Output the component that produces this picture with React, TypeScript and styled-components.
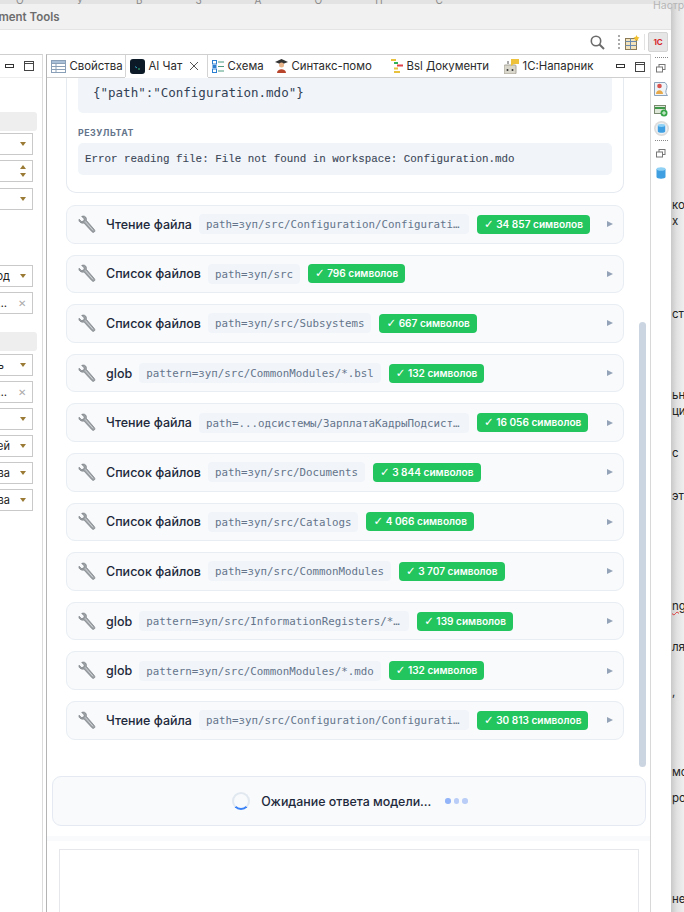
import React from "react";
import styled, { createGlobalStyle } from "styled-components";

const Global = createGlobalStyle`
  html, body { margin: 0; padding: 0; background: #e4e4e4; }
  * { box-sizing: border-box; }
  #root { width: 684px; height: 912px; overflow: hidden; }
`;

const UI = `Inter, "Noto Sans", sans-serif`;

const Page = styled.div`
  position: relative; width: 684px; height: 912px; overflow: hidden;
  display: flex; flex-direction: column; font-family: ${UI}; color: #1f2937;
`;
const Strip = styled.div`
  height: 4px; flex: none; overflow: hidden; background: #e3e3e3; color: #8a8a8a;
  display: flex; gap: 52px; padding-left: 16px; font-size: 10px; line-height: 0; letter-spacing: 1px;
`;
const CornerText = styled.div`
  position: absolute; left: 653px; top: 0; font-size: 10.5px; line-height: 12px; color: #b5b5b5;
`;
const Below = styled.div`flex: 1; min-height: 0; display: flex;`;
const Win = styled.div`
  width: 671px; flex: none; display: flex; flex-direction: column; background: #fff;
  border-top-right-radius: 10px; overflow: hidden;
`;
const Backdrop = styled.div`
  flex: 1; overflow: hidden; white-space: nowrap; font-size: 11.5px; line-height: 14px; color: #222;
  background: linear-gradient(90deg, #c9c9c9 0, #e2e2e2 6px, #efefef 13px);
  display: flex; flex-direction: column; padding-left: 1px;
`;
const Scrap = styled.span<{ $top: number; $red?: boolean }>`
  margin-top: ${p => p.$top}px; height: 14px; display: block;
  ${p => p.$red ? "text-decoration: underline wavy #d33; text-decoration-thickness: 1px;" : ""}
`;
const TitleBar = styled.div`
  height: 26px; flex: none; background: #f1f1f1; border-bottom: 1px solid #e4e4e4;
  display: flex; align-items: center; overflow: hidden;
`;
const Title = styled.div`
  margin-left: -47px; font-weight: 600; font-size: 11.5px; color: #6d6d6d; white-space: nowrap;
`;
const Toolbar = styled.div`
  height: 24px; flex: none; background: #fff; display: flex; align-items: center; justify-content: flex-end; padding-right: 3px;
`;
const ToolDots = styled.div`width: 1px; height: 14px; margin: 0 5px 0 13px; border-left: 2px dotted #aaa;`;
const ToolSep = styled.div`width: 1px; height: 16px; margin: 0 3px 0 4px; background: #e2e2e2;`;
const OneCButton = styled.div`
  width: 20px; height: 20px; background: #e6e6e6; border: 1px solid #d4d4d4; border-radius: 2px;
  display: flex; align-items: center; justify-content: center;
`;
const OneCText = styled.span`font-size: 8px; font-weight: 700; color: #d8262c; letter-spacing: -.3px;`;
const Bench = styled.div`flex: 1; min-height: 0; display: flex;`;

const LeftPanel = styled.div`
  width: 43px; flex: none; border-top: 1px solid #cfcfcf; border-right: 1px solid #dcdcdc; overflow: hidden;
`;
const PanelControls = styled.div<{ $pad?: number }>`
  display: flex; align-items: center; gap: 10px; justify-content: flex-end;
  padding-right: ${p => p.$pad ?? 8}px; height: 23px; flex: none;
`;
const LeftHead = styled(PanelControls)`border-bottom: 1px solid #eee;`;
const SectionBar = styled.div<{ $top: number }>`
  margin-top: ${p => p.$top}px; width: 37px; height: 19px; background: #eeeeee; border-radius: 0 3px 3px 0;
`;
const Field = styled.div<{ $top: number }>`
  margin-top: ${p => p.$top}px; width: 33px; height: 22px; background: #fff; border: 1px solid #c9c9c9; border-left: 0;
  display: flex; align-items: center; padding-right: 6px;
  font-size: 11px; color: #222; overflow: hidden; white-space: nowrap;
`;
const FieldText = styled.span<{ $w: number }>`
  width: ${p => p.$w}px; flex: none; overflow: hidden; display: flex; justify-content: flex-end;
`;
const Caret = styled.span<{ $up?: boolean }>`
  flex: none; width: 0; height: 0; border-left: 3.5px solid transparent; border-right: 3.5px solid transparent;
  ${p => p.$up ? "border-bottom: 4px solid #9a7a35;" : "border-top: 4px solid #9a7a35;"}
`;
const FieldEnd = styled.span`margin-left: auto; display: flex;`;
const Spin = styled.span`margin-left: auto; display: flex; flex-direction: column; gap: 4px;`;
const Clear = styled.span`color: #aaa; font-size: 10px; line-height: 1;`;

const Center = styled.div`
  width: 605px; margin-left: 3px; flex: none; display: flex; flex-direction: column; min-height: 0;
  border-left: 1.5px solid #b4b4b4; border-top: 1px solid #cfcfcf; border-right: 1px solid #d8d8d8;
`;
const Tabs = styled.div`
  height: 23px; flex: none; display: flex; align-items: stretch; font-size: 11.4px; color: #2b2b2b;
  border-bottom: 1px solid #cfcfcf; white-space: nowrap;
`;
const Tab = styled.div<{ $w: number; $active?: boolean }>`
  width: ${p => p.$w}px; flex: none; display: flex; align-items: center; gap: 3.5px; padding-left: 4px;
  ${p => p.$active ? "background: #fff; border-left: 1px solid #d4d4d4; border-right: 1px solid #d4d4d4; box-shadow: 0 1px 0 #fff;" : ""}
`;
const TabClose = styled.span`margin-left: 3px; color: #555; display: flex;`;
const TabControls = styled(PanelControls)`flex: 1; padding-right: 5px;`;
const ScrollArea = styled.div`
  position: relative; height: 689px; flex: none; overflow: hidden; padding: 0 26px 0 19px; background: #fff;
`;
const ScrollThumb = styled.div`
  position: absolute; left: 592px; top: 244px; width: 7px; height: 445px; background: #cbd5e1; border-radius: 4px;
`;
const ResultCard = styled.div`
  height: 115px; border: 1px solid #e5e9f0; border-top: 0; border-radius: 0 0 10px 10px; padding: 0 11px;
`;
const CodeBlock = styled.div`
  height: 35px; background: #f1f5f9; border-radius: 0 0 5px 5px; padding: 0 15px;
  font-family: "DejaVu Sans Mono", monospace; font-size: 12.5px; color: #334155; line-height: 29px;
`;
const SmallHead = styled.div`
  margin-top: 14px; font-size: 8.8px; font-weight: 700; letter-spacing: .5px; color: #64748b; line-height: 11px;
`;
const ResultBlock = styled.div`
  margin-top: 5px; height: 32px; background: #f1f5f9; border-radius: 5px; padding: 0 7px;
  font-family: "Liberation Mono", monospace; font-size: 10.85px; color: #3b4657; line-height: 33px;
  -webkit-text-stroke: .1px #3b4657; white-space: nowrap;
`;
const RowList = styled.div`margin-top: 12px; display: flex; flex-direction: column; gap: 11px;`;
const Row = styled.div`
  height: 38.6px; background: #f8fafc; border: 1px solid #e8edf3; border-radius: 9px;
  display: flex; align-items: center; padding: 0 11px; position: relative;
`;
const Label = styled.span`
  margin-left: 10px; font-size: 12.5px; font-weight: 500; color: #1e293b; white-space: nowrap; flex: none;
`;
const Chip = styled.span<{ $max?: number }>`
  margin-left: 7px; height: 20px; line-height: 21px; padding: 0 7px; border-radius: 4px; background: #f1f5f9;
  font-family: "DejaVu Sans Mono", monospace; font-size: 10.8px; color: #64748b;
  white-space: nowrap; overflow: hidden; text-overflow: ellipsis; flex: none;
  ${p => p.$max ? `width: ${p.$max}px;` : ""}
`;
const Badge = styled.span`
  margin-left: 8px; height: 19px; line-height: 19px; padding: 0 7px; border-radius: 4px; background: #22c55e;
  color: #fff; font-size: 10.1px; font-weight: 600; white-space: nowrap; flex: none;
`;
const Check = styled.span`font-family: "DejaVu Sans", sans-serif; font-weight: 400; font-size: 11.5px; line-height: 1;`;
const Arrow = styled.span`
  margin-left: auto; margin-right: -1px; width: 0; height: 0;
  border-left: 6px solid #94a3b8; border-top: 3px solid transparent; border-bottom: 3px solid transparent;
`;
const Wait = styled.div`
  margin: 9px 0 0 4.5px; width: 594px; height: 50px; flex: none; background: #f8fafc; border: 1px solid #e5eaf2; border-radius: 9px;
  display: flex; align-items: center; justify-content: center; padding-left: 3px;
`;
const Spinner = styled.span`
  width: 18px; height: 18px; border-radius: 50%; border: 2px solid #e2e8f0; border-bottom-color: #3b82f6; flex: none;
`;
const WaitText = styled.span`margin-left: 11px; font-size: 12.4px; font-weight: 500; color: #1e293b; white-space: nowrap;`;
const Dots = styled.span`margin-left: 14px; display: flex; gap: 3px;`;
const Dot = styled.span<{ $c: string }>`width: 5.5px; height: 5.5px; border-radius: 50%; background: ${p => p.$c};`;
const Pale = styled.div`margin-top: 10px; height: 5px; flex: none; background: #f8fafc;`;
const InputBox = styled.div`
  margin: 8px 0 0 12px; width: 580px; flex: 1; background: #fff; border: 1px solid #e5e7eb; border-bottom: 0;
`;
const Trim = styled.div`
  flex: 1; display: flex; flex-direction: column; align-items: center; padding-top: 3px; border-top: 0; background: #fff;
`;
const TrimDots = styled.div<{ $top: number }>`margin-top: ${p => p.$top}px; width: 13px; border-top: 1px dotted #888;`;
const TrimIcon = styled.div<{ $top: number }>`margin-top: ${p => p.$top}px; min-height: 14px; display: flex;`;

const Minimize = () => <svg width="9" height="5" viewBox="0 0 9 5"><rect x=".5" y=".5" width="8" height="3" fill="#fff" stroke="#333" /></svg>;
const Maximize = () => <svg width="10" height="10" viewBox="0 0 10 10"><rect x=".5" y=".5" width="9" height="9" fill="#fff" stroke="#444" /><path d="M0 2.5h10" stroke="#444" /></svg>;
const Restore = () => <svg width="10" height="9" viewBox="0 0 10 9" fill="#fff" stroke="#777"><rect x="3" y=".5" width="6" height="5" /><rect x=".5" y="3" width="6" height="5" /></svg>;
const RingDb = () => (
  <svg width="15" height="15" viewBox="0 0 15 15">
    <circle cx="7.5" cy="7.5" r="7.5" fill="#dcdcdc" /><circle cx="7.5" cy="7.5" r="5.8" fill="#eef1f4" />
    <path d="M3.8 4.5v6c0 1.8 7.4 1.8 7.4 0v-6z" fill="#3f9fe0" /><ellipse cx="7.5" cy="4.5" rx="3.7" ry="1.4" fill="#8fd0f5" />
  </svg>
);
const PlainDb = () => (
  <svg width="10" height="12" viewBox="0 0 10 12">
    <path d="M.5 2v8c0 2.2 9 2.2 9 0V2z" fill="#3f9fe0" /><ellipse cx="5" cy="2" rx="4.5" ry="1.8" fill="#8fd0f5" />
  </svg>
);
const Wrench = () => (
  <svg width="18" height="19" viewBox="0 0 18 19" style={{ flex: "none" }}>
    <path d="M1 4.2 3.6 6.6l2-.5.7-2.1L3.7 1.4C5.6.5 7.700 1.300 8.300 3.200c.2.800.2 1.500 0 2.100l8 9.200c.8.900.7 1.900 0 2.500-.7.600-1.700.5-2.400-.3L5.900 8c-.8.300-1.800.2-2.600-.1C1.500 7.200.6 5.900 1 4.200z" fill="#9ca1a6" stroke="#6f7479" strokeWidth=".6" />
    <path d="M7.200 6.400 15 15.300" stroke="#d6d9dc" strokeWidth=".9" fill="none" />
  </svg>
);
const SheetIcon = () => (
  <svg width="15" height="13" viewBox="0 0 15 13"><rect x=".5" y=".5" width="14" height="12" fill="#fff" stroke="#8aa0b8" /><path d="M.5 3.5h14M5 3.5v9M.5 6.5h14M.5 9.5h14" stroke="#8aa0b8" /><rect x="1" y="1" width="13" height="2" fill="#a9c0d8" /></svg>
);
const AiIcon = () => (
  <svg width="15" height="15" viewBox="0 0 15 15"><rect width="15" height="15" rx="3" fill="#0b1a26" /><path d="M5 7.5 7 9" stroke="#2fa4c7" /><path d="M8 10h2" stroke="#3bbf7a" /></svg>
);
const SchemaIcon = () => (
  <svg width="12" height="13" viewBox="0 0 12 13" fill="none"><rect x=".5" y=".5" width="4" height="3.5" stroke="#2a7fd0" /><rect x=".5" y="9" width="4" height="3.5" stroke="#2a7fd0" /><rect x=".5" y="5" width="4" height="3" fill="#2a7fd0" /><path d="M6 2h6M6 6.500h6M6 11h6" stroke="#4a9a80" /></svg>
);
const SyntaxIcon = () => (
  <svg width="13" height="14" viewBox="0 0 13 14"><path d="M0 3 6.5 0 13 3 6.5 5.5z" fill="#333" /><circle cx="6.5" cy="6" r="2.5" fill="#e8b48a" /><path d="M2 14c0-5 9-5 9 0z" fill="#b8442c" /></svg>
);
const BslIcon = () => (
  <svg width="12" height="14" viewBox="0 0 12 14"><path d="M0 1h5" stroke="#e8c23c" strokeWidth="2" /><path d="M3 4h4" stroke="#2fb35a" strokeWidth="2" /><path d="M6 6.5h6" stroke="#e0424a" strokeWidth="2" /><path d="M3 9.5h4M3 13h6" stroke="#e8c23c" strokeWidth="2" /></svg>
);
const BotIcon = () => (
  <svg width="15" height="16" viewBox="0 0 15 16"><rect x="0" y="7" width="12" height="9" rx="1" fill="#d9d6cc" stroke="#a8a598" /><circle cx="3.5" cy="12" r="1" fill="#333" /><circle cx="8.5" cy="12" r="1" fill="#333" /><path d="M7 1h8v5H10L7 8z" fill="#eec23a" /><path d="M4 3v3" stroke="#555" /></svg>
);
const SearchIcon = () => (
  <svg width="15" height="15" viewBox="0 0 15 15" fill="none" stroke="#6b6b6b" strokeWidth="1.6"><circle cx="6" cy="6" r="4.7" /><path d="m9.5 9.500 4.5 4.500" strokeWidth="2" /></svg>
);
const TableIcon = () => (
  <svg width="15" height="15" viewBox="0 0 15 15"><rect x=".5" y="3.5" width="11" height="11" fill="#f3e3bd" stroke="#8a7a55" /><path d="M.5 6.500h11M.5 10.500h11M5.500 3.500v11" stroke="#6a8ab0" /><path d="m11.500 0 1 2 2 .5-1.500 1.500.3 2-1.800-1-1.800 1 .3-2L8.500 2.500l2-.5z" fill="#f0c030" /></svg>
);
const PersonIcon = () => (
  <svg width="14" height="14" viewBox="0 0 14 14"><path d="M.5.500h10.500c2 2 2.500 4 1.500 6.500s-1 4.500 1 6.500H.5z" fill="#eef3f8" stroke="#8da3bb" /><circle cx="5.500" cy="4" r="2.300" fill="#d9534f" /><path d="M2 12c0-5 7-5 7 0z" fill="#e8a94a" /></svg>
);
const AddIcon = () => (
  <svg width="14" height="13" viewBox="0 0 14 13"><rect x=".5" y="1.500" width="11" height="8" fill="#dfe7d8" stroke="#7a8a70" /><path d="M1 4h10" stroke="#3f9a4a" strokeWidth="2" /><circle cx="10" cy="9" r="3.500" fill="#3aa64a" /><path d="M10 7v4M8 9h4" stroke="#e8f5e8" /></svg>
);
const CloseGlyph = () => <svg width="10" height="10" viewBox="0 0 10 10" stroke="#555" fill="none"><path d="m1 1 8 8M9 1 1 9" /></svg>;

const rows = [
  { l: "Чтение файла", c: "path=зуп/src/Configuration/Configuration.mdo", m: 270, b: "34 857 символов" },
  { l: "Список файлов", c: "path=зуп/src", b: "796 символов" },
  { l: "Список файлов", c: "path=зуп/src/Subsystems", b: "667 символов" },
  { l: "glob", c: "pattern=зуп/src/CommonModules/*.bsl", b: "132 символов" },
  { l: "Чтение файла", c: "path=...одсистемы/ЗарплатаКадрыПодсистемы.mdo", m: 270, b: "16 056 символов" },
  { l: "Список файлов", c: "path=зуп/src/Documents", b: "3 844 символов" },
  { l: "Список файлов", c: "path=зуп/src/Catalogs", b: "4 066 символов" },
  { l: "Список файлов", c: "path=зуп/src/CommonModules", b: "3 707 символов" },
  { l: "glob", c: "pattern=зуп/src/InformationRegisters/*.mdo", m: 270, b: "139 символов" },
  { l: "glob", c: "pattern=зуп/src/CommonModules/*.mdo", b: "132 символов" },
  { l: "Чтение файла", c: "path=зуп/src/Configuration/Configuration.mdo", m: 270, b: "30 813 символов" },
];

export default function App() {
  return (
    <Page>
      <Global />
      <Strip><span>О</span><span>У</span><span>Б</span><span>З</span><span>А</span><span>О</span><span>П</span><span>С</span></Strip>
      <CornerText>Настр</CornerText>
      <Below>
        <Win>
          <TitleBar><Title>Development Tools</Title></TitleBar>
          <Toolbar>
            <SearchIcon /><ToolDots /><TableIcon /><ToolSep /><OneCButton><OneCText>1С</OneCText></OneCButton>
          </Toolbar>
          <Bench>
            <LeftPanel>
              <LeftHead $pad={8}><Minimize /><Maximize /></LeftHead>
              <SectionBar $top={34} />
              <Field $top={2}><FieldEnd><Caret /></FieldEnd></Field>
              <Field $top={5}><Spin><Caret $up /><Caret /></Spin></Field>
              <Field $top={5.5}><FieldEnd><Caret /></FieldEnd></Field>
              <Field $top={55}><FieldText $w={10}>од</FieldText><FieldEnd><Caret /></FieldEnd></Field>
              <Field $top={5}><FieldText $w={7}>…</FieldText><FieldEnd><Clear>✕</Clear></FieldEnd></Field>
              <SectionBar $top={18} />
              <Field $top={3}><FieldText $w={4}>ь</FieldText><FieldEnd><Caret /></FieldEnd></Field>
              <Field $top={5}><FieldText $w={7}>…</FieldText><FieldEnd><Clear>✕</Clear></FieldEnd></Field>
              <Field $top={5}><FieldEnd><Caret /></FieldEnd></Field>
              <Field $top={5}><FieldText $w={10}>ей</FieldText><FieldEnd><Caret /></FieldEnd></Field>
              <Field $top={5}><FieldText $w={10}>ва</FieldText><FieldEnd><Caret /></FieldEnd></Field>
              <Field $top={5}><FieldText $w={10}>ва</FieldText><FieldEnd><Caret /></FieldEnd></Field>
            </LeftPanel>
            <Center>
              <Tabs>
                <Tab $w={78}><SheetIcon />Свойства</Tab>
                <Tab $w={83} $active><AiIcon />AI Чат<TabClose><CloseGlyph /></TabClose></Tab>
                <Tab $w={63}><SchemaIcon />Схема</Tab>
                <Tab $w={116}><SyntaxIcon />Синтакс-помо</Tab>
                <Tab $w={113}><BslIcon />Bsl Документи</Tab>
                <Tab $w={100}><BotIcon />1С:Напарник</Tab>
                <TabControls><Minimize /><Maximize /></TabControls>
              </Tabs>
              <ScrollArea>
                <ResultCard>
                  <CodeBlock>{'{"path":"Configuration.mdo"}'}</CodeBlock>
                  <SmallHead>РЕЗУЛЬТАТ</SmallHead>
                  <ResultBlock>Error reading file: File not found in workspace: Configuration.mdo</ResultBlock>
                </ResultCard>
                <RowList>
                  {rows.map((r, i) => (
                    <Row key={i}>
                      <Wrench />
                      <Label>{r.l}</Label>
                      <Chip $max={r.m}>{r.c}</Chip>
                      <Badge><Check>✓</Check> {r.b}</Badge>
                      <Arrow />
                    </Row>
                  ))}
                </RowList>
                <ScrollThumb />
              </ScrollArea>
              <Wait>
                <Spinner />
                <WaitText>Ожидание ответа модели...</WaitText>
                <Dots><Dot $c="#93b4f8" /><Dot $c="#b9cdf7" /><Dot $c="#b9cdf7" /></Dots>
              </Wait>
              <Pale />
              <InputBox />
            </Center>
            <Trim>
              <TrimDots $top={0} />
              <TrimIcon $top={6}><Restore /></TrimIcon>
              <TrimIcon $top={4}><PersonIcon /></TrimIcon>
              <TrimIcon $top={8}><AddIcon /></TrimIcon>
              <TrimIcon $top={3}><RingDb /></TrimIcon>
              <TrimDots $top={4} />
              <TrimIcon $top={8}><Restore /></TrimIcon>
              <TrimIcon $top={4}><PlainDb /></TrimIcon>
            </Trim>
          </Bench>
        </Win>
        <Backdrop>
          <Scrap $top={194}>ко</Scrap>
          <Scrap $top={2}>х</Scrap>
          <Scrap $top={79}>стр</Scrap>
          <Scrap $top={67}>ьн</Scrap>
          <Scrap $top={2}>ци</Scrap>
          <Scrap $top={28}>с</Scrap>
          <Scrap $top={29}>эта</Scrap>
          <Scrap $top={96} $red>ng</Scrap>
          <Scrap $top={27}>ля</Scrap>
          <Scrap $top={31}>,</Scrap>
          <Scrap $top={66}>мот</Scrap>
          <Scrap $top={12}>роч</Scrap>
          <Scrap $top={87}>не</Scrap>
        </Backdrop>
      </Below>
    </Page>
  );
}
